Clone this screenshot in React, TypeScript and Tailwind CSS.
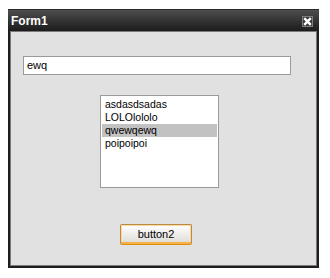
import React from "react";

export default function App() {
  const items = ["asdasdsadas", "LOLOlololo", "qwewqewq", "poipoipoi"];
  return (
    <div className="w-[330px] h-[278px] bg-white pt-[9px] pl-[8px]" style={{ fontFamily: '"Liberation Sans", Arial, sans-serif' }}>
      <div className="w-[311px] h-[259px] flex flex-col bg-[#1e1e1e]">
        <div className="h-[22px] flex items-center justify-between pl-[3px] pr-[6px] bg-gradient-to-b from-[#4e4e4e] to-[#1c1c1c] border-t border-[#2a2a2a]">
          <span className="text-white font-bold text-[12px] leading-none mt-[1px]">Form1</span>
          <div className="w-[11px] h-[11px] bg-[#3a3a3a] border border-[#808080] flex items-center justify-center mt-[2px]">
            <svg width="9" height="9" viewBox="0 0 9 9">
              <path d="M1.2 1.2 L7.8 7.8 M7.8 1.2 L1.2 7.8" stroke="white" strokeWidth="2.4" />
            </svg>
          </div>
        </div>
        <div className="flex-1 mx-[2px] mb-[2px] border border-[#7a7a7a] bg-[#e1e1e1] flex flex-col">
          <div className="ml-[12px] mt-[24px] w-[268px] h-[19px] bg-white border border-[#9a9a9a] flex items-center pl-[3px] text-[11px] text-black">
            ewq
          </div>
          <div className="ml-[89px] mt-[20px] w-[119px] h-[93px] bg-white border border-[#9a9a9a] pt-[2px] px-[1px]">
            {items.map((it, i) => (
              <div key={i} className={`h-[13px] leading-[13px] pl-[3px] text-[10.5px] text-black ${i === 2 ? "bg-[#c2c2c2]" : ""}`}>
                {it}
              </div>
            ))}
          </div>
          <div className="ml-[109px] mt-[36px] w-[72px] h-[21px] rounded-[2px] border border-[#b98a4a] border-b-[#e08a10] bg-gradient-to-b from-[#ffffff] to-[#dcdad4] shadow-[inset_0_-2px_0_0_#f5b347,inset_0_0_0_1px_#fbd89a] flex items-center justify-center text-[11px] text-black">
            button2
          </div>
        </div>
      </div>
    </div>
  );
}
